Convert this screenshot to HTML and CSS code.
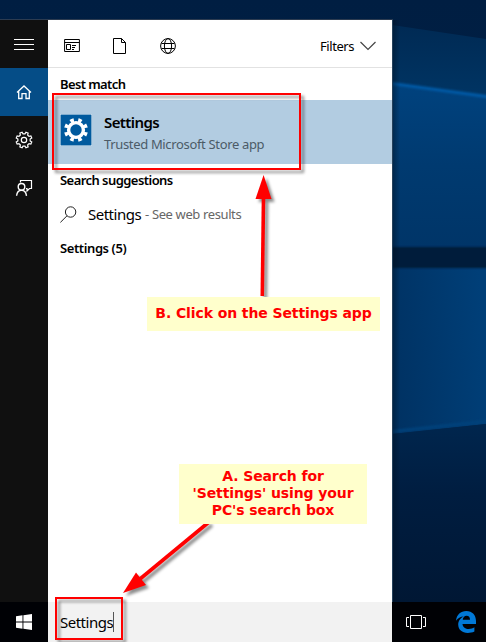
FILE: index.html
```html
<!DOCTYPE html>
<html lang="en">
<head>
    <meta charset="UTF-8">
    <meta name="viewport" content="width=device-width, initial-scale=1.0">
    <title>Search</title>
    <link rel="stylesheet" href="styles.css">
</head>
<body>
    <div class="desktop">
        <svg class="wallpaper" viewBox="0 0 486 642">
            <defs>
                <linearGradient id="top" x1="0" y1="0" x2="0" y2="1">
                    <stop offset="0" stop-color="#001e42"/>
                    <stop offset="1" stop-color="#002750"/>
                </linearGradient>
                <linearGradient id="haze" x1="0" y1="0" x2="0" y2="1">
                    <stop offset="0" stop-color="#002a54"/>
                    <stop offset="1" stop-color="#003564"/>
                </linearGradient>
                <linearGradient id="pane" x1="0" y1="0" x2="0" y2="1">
                    <stop offset="0" stop-color="#00427e"/>
                    <stop offset="0.5" stop-color="#003a70"/>
                    <stop offset="1" stop-color="#003568"/>
                </linearGradient>
                <linearGradient id="pane2" x1="0" y1="0.6" x2="1" y2="0.4">
                    <stop offset="0" stop-color="#003263"/>
                    <stop offset="1" stop-color="#003f78"/>
                </linearGradient>
                <linearGradient id="floor" x1="0" y1="0" x2="0" y2="1">
                    <stop offset="0" stop-color="#00264e"/>
                    <stop offset="0.4" stop-color="#001d40"/>
                    <stop offset="1" stop-color="#001734"/>
                </linearGradient>
                <linearGradient id="edge" x1="0" y1="0" x2="1" y2="0">
                    <stop offset="0" stop-color="#001020" stop-opacity="0.5"/>
                    <stop offset="1" stop-color="#001020" stop-opacity="0"/>
                </linearGradient>
                <filter id="soft" x="-10%" y="-50%" width="120%" height="200%">
                    <feGaussianBlur stdDeviation="1"/>
                </filter>
            </defs>
            <rect width="486" height="642" fill="url(#top)"/>
            <path d="M392 25 486 39V100H392Z" fill="url(#haze)"/>
            <path d="M392 83 486 96V248H392Z" fill="url(#pane)"/>
            <path d="M388 83 490 97" stroke="#0559a4" stroke-width="3" filter="url(#soft)"/>
            <path d="M392 267H486V424L392 434Z" fill="url(#pane2)"/>
            <path d="M388 432 490 421" stroke="#00427c" stroke-width="3" filter="url(#soft)"/>
            <path d="M392 434 486 424V602H392Z" fill="url(#floor)"/>
            <path d="M388 247H490V268H388Z" fill="#001a3a" filter="url(#soft)"/>
            <rect x="392" y="20" width="8" height="582" fill="url(#edge)"/>
        </svg>

        <div class="search-panel">
            <nav class="rail">
                <div class="rail-item">
                    <svg width="48" height="48" viewBox="0 0 48 48"><path d="M14 19.5H34M14 24.5H34M14 29.5H34"/></svg>
                </div>
                <div class="rail-item active">
                    <svg width="48" height="48" viewBox="0 0 48 48"><path d="M17 24.5 24 18 31 24.5M18.7 23.5V30.5H22V25.7H26V30.5H29.3V23.5" stroke-width="1.3"/></svg>
                </div>
                <div class="rail-item">
                    <svg width="48" height="48" viewBox="-24 -24 48 48">
                        <path d="M6.12 .97 7.76 1.94 6.86 4.12 5.02 3.64 3.64 5.02 4.12 6.86 1.94 7.76 .97 6.12H-.97L-1.94 7.76-4.12 6.86-3.64 5.02-5.02 3.64-6.86 4.12-7.76 1.94-6.12 .97V-.97L-7.76-1.94-6.86-4.12-5.02-3.64-3.64-5.02-4.12-6.86-1.94-7.76-.97-6.12H.97L1.94-7.76 4.12-6.86 3.64-5.02 5.02-3.64 6.86-4.12 7.76-1.94 6.12-.97Z" stroke-width="1.2"/>
                        <circle r="2.7" stroke-width="1.2"/>
                    </svg>
                </div>
                <div class="rail-item">
                    <svg width="48" height="48" viewBox="0 0 48 48">
                        <path d="M20.5 18.5V16.5H31.5V24.5H29.5L27 27V24.5H26" stroke-width="1.2"/>
                        <circle cx="21.5" cy="22.8" r="3.3" stroke-width="1.4"/>
                        <path d="M16.6 31.8C17 28 19 26.3 21.5 26.3S26 28 26.5 31.8" stroke-width="1.4"/>
                    </svg>
                </div>
            </nav>

            <main class="results">
                <header class="filters-bar">
                    <svg class="filter-icon" width="16" height="16" viewBox="0 0 16 16"><path d="M.6 1.5H15.4V13.5H.6ZM.6 4.5H15.4M2.5 6.5H6.5V11.5H2.5ZM8 7.5H12M8 9.5H11M8 11.5H10"/></svg>
                    <svg class="filter-icon" width="16" height="16" viewBox="0 0 16 16"><path d="M1.5 .5H9.5L13.5 4.5V15.5H1.5ZM9.5 .5V4.5H13.5"/></svg>
                    <svg class="filter-icon" width="16" height="16" viewBox="0 0 16 16">
                        <circle cx="8" cy="8" r="7.4"/><ellipse cx="8" cy="8" rx="3.6" ry="7.4"/><path d="M1.5 5.5H14.5M1.5 10.5H14.5"/>
                    </svg>
                    <div class="filters">
                        <span class="filters-text">Filters</span>
                        <svg width="16" height="10" viewBox="0 0 16 10"><path d="M.5 1 8 8.5 15.5 1" stroke-width="1.2"/></svg>
                    </div>
                </header>

                <h2 class="group-title best">Best match</h2>
                <div class="best-match">
                    <svg class="app-tile" width="32" height="32" viewBox="-16 -16 32 32">
                        <rect x="-16" y="-16" width="32" height="32" fill="#005a9e"/>
                        <circle r="7.4" stroke-width="3.4"/>
                        <circle r="10" stroke-width="4" pathLength="80" stroke-dasharray="4.6 5.4" stroke-dashoffset="2.3" transform="rotate(22.5)"/>
                    </svg>
                    <div class="app-text">
                        <span class="app-name">Settings</span>
                        <span class="app-kind">Trusted Microsoft Store app</span>
                    </div>
                </div>

                <h2 class="group-title suggestions">Search suggestions</h2>
                <div class="suggestion">
                    <svg width="17" height="17" viewBox="0 0 17 17"><circle cx="10.6" cy="6" r="5.2"/><path d="M7 9.8.4 16.4"/></svg>
                    <span class="term">Settings</span>
                    <span class="hint">- See web results</span>
                </div>
                <h2 class="group-title count">Settings (5)</h2>
            </main>
        </div>

        <footer class="taskbar">
            <div class="start">
                <svg width="16" height="16" viewBox="0 0 16 16"><path d="M0 2.2 6.5 1.3V7.5H0ZM7.4 1.2 16 0V7.5H7.4ZM0 8.4H6.5V14.7L0 13.8ZM7.4 8.4H16V16L7.4 14.8Z" fill="#fff"/></svg>
            </div>
            <div class="search-box"><span class="query">Settings</span><span class="caret"></span></div>
            <div class="task-icons">
                <svg width="20" height="14" viewBox="0 0 20 14"><path d="M4.5 .5H15.5V13.5H4.5ZM3 2.5H.5V11.5H3M17 2.5H19.5V11.5H17" stroke="#fff"/></svg>
                <svg width="20" height="22" viewBox="0 0 20 22"><path d="M0 9.8C.7 3.5 4.7 0 10.3 0 16.4 0 20 4.2 20 10V13H6.5C6.8 16.5 9.6 18 12.6 18 15 18 16.8 17.3 18.4 16.3V20.6C16.4 21.6 14.2 22 11.8 22 6 22 2.2 18.7 2.2 13.6 2.2 10 4.4 7 7.8 5.6 4.5 5.7 1.8 7.3 0 9.8ZM6.7 8.8H14C14 6.2 12.8 4.8 10.6 4.8 8.3 4.8 7 6.7 6.7 8.8Z" fill="#0078d7"/></svg>
            </div>
        </footer>

        <!-- step annotations over the desktop -->
        <svg class="arrows" viewBox="0 0 486 642">
            <path d="M262.3 296 263.5 198" stroke-width="3.6"/>
            <path class="head" d="M263.6 175 271.5 199H255.5Z"/>
            <path d="M209 522 140 579" stroke-width="3.6"/>
            <path class="head" d="M123 593 136 572.5 146 585Z"/>
        </svg>
        <div class="frame frame-app"></div>
        <div class="frame frame-box"></div>
        <div class="note note-b">B. Click on the Settings app</div>
        <div class="note note-a">A. Search for<br>'Settings' using your<br>PC's search box</div>
    </div>
</body>
</html>
```

FILE: styles.css
```css
body {
    margin: 0;
    font-family: "Noto Sans", "Open Sans", sans-serif;
    font-size: 13px;
    color: #000;
}
svg {
    display: block;
    fill: none;
    flex-shrink: 0;
}
.desktop {
    position: relative;
    width: 486px;
    height: 642px;
    overflow: hidden;
    display: flex;
    flex-direction: column;
    background: #001e42;
}
.wallpaper,
.arrows {
    position: absolute;
    top: 0;
    left: 0;
    width: 486px;
    height: 642px;
}
.search-panel {
    position: relative;
    display: flex;
    width: 392px;
    height: 582px;
    margin-top: 19px;
    border-top: 1px solid #2c3b50;
    border-right: 1px solid #26425c;
    background: #fff;
}
.rail {
    width: 48px;
    background: #101010;
}
.rail-item {
    height: 48px;
    stroke: #fff;
}
.rail-item.active {
    background: #054d87;
}
.results {
    flex: 1;
}
.filters-bar {
    display: flex;
    align-items: center;
    height: 48px;
    padding: 4px 16px 0;
    box-sizing: border-box;
    border-bottom: 1px solid #e2e2e2;
}
.filter-icon {
    margin-right: 32px;
    stroke: #000;
}
.filters {
    display: flex;
    align-items: center;
    gap: 6px;
    margin-left: auto;
    stroke: #444;
}
.filters-text {
    letter-spacing: -0.45px;
}
.group-title {
    margin: 0;
    padding-left: 12px;
    font-size: 13px;
    font-weight: 600;
    line-height: 18px;
}
.best {
    padding-top: 7px;
    height: 25px;
    letter-spacing: -0.6px;
}
.best-match {
    display: flex;
    height: 64px;
    padding: 14px 12px;
    box-sizing: border-box;
    background: #b2cce1;
}
.app-tile {
    stroke: #fff;
}
.app-text {
    display: flex;
    flex-direction: column;
    margin-left: 12px;
}
.app-name {
    margin-top: -3px;
    font-size: 15px;
    font-weight: 600;
    line-height: 22px;
    letter-spacing: -0.6px;
}
.app-kind {
    margin-top: 1px;
    line-height: 20px;
    letter-spacing: -0.34px;
    color: #4c5b67;
}
.suggestions {
    padding-top: 7px;
    letter-spacing: -0.55px;
}
.suggestion {
    display: flex;
    align-items: center;
    height: 50px;
    padding-left: 12px;
    stroke: #222;
}
.term {
    margin-left: 11px;
    font-size: 15px;
    letter-spacing: -0.5px;
}
.hint {
    margin-left: 4px;
    color: #666;
    letter-spacing: -0.38px;
}
.count {
    letter-spacing: -0.4px;
}
.taskbar {
    position: relative;
    display: flex;
    height: 40px;
    background: #000105;
}
.start {
    display: flex;
    align-items: center;
    justify-content: center;
    width: 48px;
}
.search-box {
    display: flex;
    align-items: center;
    width: 344px;
    padding-left: 12px;
    box-sizing: border-box;
    background: #f2f2f2;
}
.query {
    font-size: 15px;
    letter-spacing: -0.5px;
}
.caret {
    width: 1px;
    height: 20px;
    background: #555;
}
.task-icons {
    display: flex;
    align-items: center;
    gap: 30px;
    padding-left: 14px;
}
.arrows {
    stroke: #f00;
    filter: drop-shadow(3px 3px 1.5px rgba(0, 0, 0, 0.45));
}
.arrows .head {
    fill: #f00;
    stroke: none;
}
.frame {
    position: absolute;
    box-sizing: border-box;
    border: 2px solid #f00;
    filter: drop-shadow(3px 3px 1.5px rgba(0, 0, 0, 0.45));
}
.frame-app {
    top: 93px;
    left: 52px;
    width: 249px;
    height: 77px;
}
.frame-box {
    top: 597px;
    left: 55px;
    width: 68px;
    height: 43px;
}
.note {
    position: absolute;
    box-sizing: border-box;
    background: #ffc;
    color: #f00;
    font-family: "DejaVu Sans", sans-serif;
    font-size: 14px;
    font-weight: bold;
    line-height: 17px;
    letter-spacing: -0.1px;
    text-align: center;
    white-space: nowrap;
}
.note-b {
    top: 297px;
    left: 147px;
    width: 233px;
    height: 34px;
    padding-top: 8px;
}
.note-a {
    top: 464px;
    left: 179px;
    width: 188px;
    height: 60px;
    padding-top: 4px;
}
```
